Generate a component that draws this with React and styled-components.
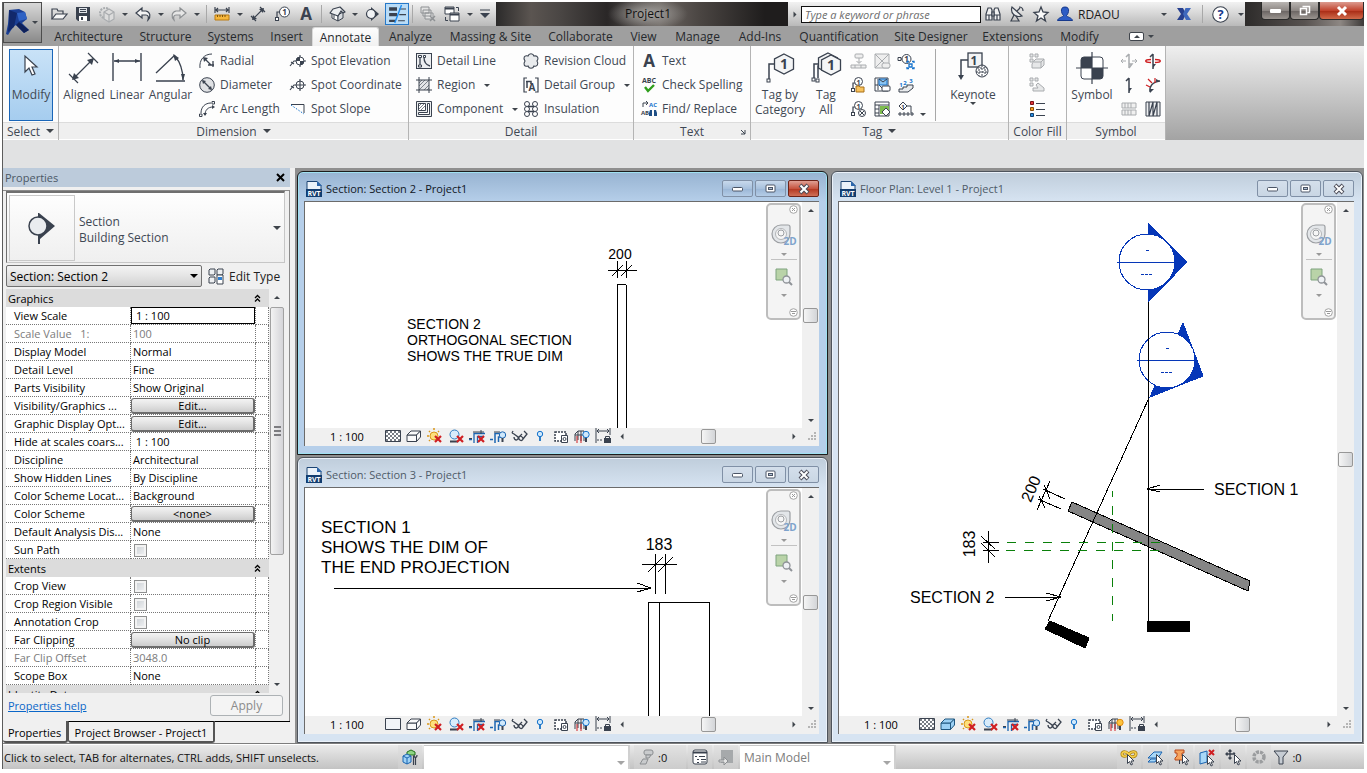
import React from "react";
import styled, { createGlobalStyle, css } from "styled-components";

const Global = createGlobalStyle`
  * { box-sizing: border-box; }
  html, body, #root { height: 100%; }
  body { margin: 0; background: #fff; font-family: "Open Sans", "Noto Sans", sans-serif; font-size: 12px; color: #1b1b1b; overflow: hidden; }
  button, input, select { font: inherit; color: inherit; margin: 0; padding: 0; border: 0; background: none; }
  svg { display: block; flex: none; overflow: visible; }
`;

/* ---------- icon drawings ---------- */
const D = "#3a424f";
const B = "#1673cc";
const G = "#a9acaf";
const R = "#cf1f22";

const L = ({ d, c = D, w = 1, f = "none", ...rest }) => (
  <path d={d} stroke={c} strokeWidth={w} fill={f} {...rest} />
);
const T = ({ x, y, s = 8, c = D, children, b = 700 }) => (
  <text x={x} y={y} fontSize={s} fill={c} fontWeight={b} textAnchor="middle">{children}</text>
);
const RedX = ({ x = 7, y = 7 }) => <L d={`M${x} ${y}l6 6m0-6l-6 6`} c={R} w={2.2} />;
const Pointer = ({ x = 8, y = 5 }) => (
  <path transform={`translate(${x} ${y})`} d="M.5.5v9l2-2 1.5 3.500 1.500-.7L4 7h3z" fill="#fff" stroke={D} />
);
const Hex = ({ x, y, r = 10 }) => (
  <path
    d={`M${x} ${y - r}l${r * 0.95} ${r / 2}v${r}l${-r * 0.95} ${r / 2}l${-r * 0.95} ${-r / 2}v${-r}z`}
    fill="#f4f5f6" stroke={D} strokeWidth="1.3"
  />
);
const box3d = (fill, c = D) => (
  <g fill={fill} stroke={c} strokeLinejoin="round">
    <path d="M1 7h9.500v6.500H1z" /><path d="M1 7l4-4h9.500l-4 4z" /><path d="M10.500 7l4-4v6l-4 4.500z" />
  </g>
);
const leader = (c = D) => (
  <g><L d="M3 12V6h4" c={c} w={1.2} /><rect x="1.500" y="11.500" width="3" height="3" fill="#fff" stroke={c} /></g>
);

const icons = {
  open: <g><L d="M1 13V3h5l1 2h5v3" w={1.2} /><L d="M1 13l4-5h11l-4 5z" w={1.2} f="#f6f6f6" /></g>,
  save: <g><path d="M1 1h14v14H3l-2-2z" fill={D} /><path d="M4 2h8v5H4z" fill="#dfe3e8" /><path d="M5 3.500h6M5 5.500h6" stroke={D} /><path d="M4 10h8v5H4z" fill="#fff" /><path d="M6 11h2v3H6z" fill={D} /></g>,
  sync: <g stroke={G} fill="#dcdcdc" strokeWidth="1.2"><circle cx="6" cy="7" r="5" fill="none" strokeWidth="2" strokeDasharray="2 1" /><path d="M5 6l5-3 5 3v7l-5 3-5-3z" /><path d="M5 6l5 3 5-3M10 9v7" fill="none" /></g>,
  undo: <L d="M7 2L1 7l6 5V9h4c2 0 3 1.500 2 5 3-3 2.500-8-2-9H7z" w={1.2} f="#f3f3f3" />,
  redo: <L d="M9 2l6 5-6 5V9H5c-2 0-3 1.500-2 5C0 11 .5 6 5 5h4z" w={1.2} f="#e6e6e6" c="#8d9093" />,
  measure: <g><L d="M1 1v6M15 1v6M2 4h12M4 2L2 4l2 2M12 2l2 2-2 2" w={1.2} /><path d="M1 9h14v5H1z" fill="#f6b73c" stroke="#b97a12" /><path d="M3.500 9v2M6 9v2M8.500 9v2M11 9v2" stroke="#7c520b" /></g>,
  dim: <g><L d="M3 13L13 3M1 10l5 5M10 1l5 5" w={1.2} /><path d="M2 14l1-5 4 4zM14 2l-5 1 4 4z" fill={D} /></g>,
  tag: <g>{leader()}<circle cx="10.500" cy="6" r="5" fill="#fff" stroke={D} /><T x="10.500" y="9" s={8}>1</T></g>,
  textA: <T x="8" y="14" s={17}>A</T>,
  house: <g stroke={D} strokeLinejoin="round"><path d="M3 7l6 2v6l-6-3z" fill="#fff" /><path d="M9 9l5-3v6l-5 3z" fill="#d5d9de" /><path d="M1 7l3-4 7-2 5 5-2 1-2-2-3 5z" fill="#eceef0" strokeWidth="1.200" /><path d="M5 9v3.500" /></g>,
  section: <g><path d="M6 1l8 7-8 7z" fill={D} /><circle cx="6" cy="8" r="4.500" fill="#f1f3f5" stroke={D} strokeWidth="1.200" /></g>,
  thin: <g><path d="M1 2h7v3H1zM1 7h7v3H1zM1 13h6v2H1z" fill={D} /><path d="M10 3.500h6M10 8.500h6M9 14h6" stroke={D} /><path d="M12 0L6 16" stroke="#1e8cf0" strokeWidth="1.200" /></g>,
  closeHidden: <g fill="#e3e3e3" stroke="#8e9194"><path d="M1 1h8v6H1zM3 4h8v6H3zM5 7h8v6H5z" /><path d="M10 10l5 5m0-5l-5 5" strokeWidth="1.500" /></g>,
  switchWin: <g stroke={D} fill="#fff"><path d="M1 1h9v7H1z" /><path d="M6 7h9v8H6z" /><path d="M6 8.500h9M1 2.500h9" strokeWidth="2" /><path d="M12 1.500h2.500V5M4 14.500H1.500V11" fill="none" /></g>,
  custom: <g><path d="M3 4h10" stroke={D} /><path d="M3 7h10l-5 5z" fill={D} /></g>,
  binoc: <g stroke={D} fill="#f1f1f1" strokeWidth="1.200"><path d="M1 14V8l2-6h3l1 2v10zM15 14V8l-2-6h-3L9 4v10z" /><path d="M7 6h2v4H7zM1 9h6M9 9h6M4 9v5M12 9v5" /></g>,
  dish: <g stroke={D} fill="#e8eaec" strokeWidth="1.200"><path d="M3 1c-2 6 3 11 10 9z" /><path d="M8 5l3-3M10 1c3 0 4 1 4 4M5 9l-3 6h8l-3-5" fill="none" /></g>,
  star: <L d="M8 1l2 5 5 .5-4 3.500 1.500 5L8 12l-4.500 3L5 10 1 6.500 6 6z" w={1.300} f="#fafafa" />,
  user: <g fill="#2c5cc5" stroke="#16398c"><path d="M8 1c3 0 4 2 3.500 4.500C11 8 10 9 9.500 9.500c0 1.500 5.500 2 6 5H.5c.5-3 6-3.500 6-5C6 9 5 8 4.500 5.500 4 3 5 1 8 1z" /></g>,
  exchange: <g><path d="M1 2h6l2 4 1 2-3 6H1l4-6z" fill="#27408f" /><path d="M15 2H9.500L7 8l3 6h5l-4-6z" fill="#3f68bd" /></g>,
  help: <g><circle cx="8" cy="8" r="7.300" fill="#fff" stroke={D} /><T x="8" y="12.500" s={12} c="#16398c">?</T></g>,

  radial: <g><L d="M1 15C0 7 5 1 13 1" /><L d="M6 6l6 6M14 8v6M9 12h6" w={1.300} /><path d="M4 4l5 1-4 4z" fill={D} /></g>,
  diameter: <g><circle cx="8" cy="8" r="7.300" fill="#dfe1e4" stroke={D} /><L d="M4 4l8 8" w={1.300} /><path d="M3 3l4 1-3 3zM13 13l-4-1 3-3z" fill={D} /></g>,
  arc: <g><L d="M2 12C2 6 6 2 12 2M6 14c0-5 3-8 8-8" /><path d="M13 .5h2.500V3H13zM.5 13H3v2.500H.5z" fill="#fff" stroke={D} /><path d="M4 12l2 3 2-3zM13 4v4l3-2z" fill={D} /></g>,
  spotElev: <g><L d="M0 13l4-5h12M10 2v12M1 9l3 2" w={1.100} /><circle cx="10" cy="8" r="4" fill="#fff" stroke={D} /><path d="M10 4v4H6a4 4 0 0 1 4-4zM10 12V8h4a4 4 0 0 1-4 4z" fill={D} /></g>,
  spotCoord: <g><L d="M0 13l4-5h12M10 2v12M1 9l3 2" w={1.100} /><circle cx="10" cy="8" r="4" fill="none" stroke={D} /></g>,
  spotSlope: <g><L d="M1 3.500h13V12" /><path d="M1 4l13 9" stroke={B} strokeDasharray="1.500 1.500" /></g>,
  detailLine: <g><rect x=".5" y=".5" width="15" height="15" fill="#eceef0" stroke={D} /><L d="M4 13V4M8 4c0 5 2 8 6 9" w={1.300} /><path d="M2.500 2.500h3v2h-3zM7.500 2.500h2v2h-2zM2.500 12h3v2h-3z" fill="#fff" stroke={D} /></g>,
  region: <g><path d="M3 3h10v10H3z" fill="#e2e4e7" /><path d="M3 13L13 3M3 9l6-6M8 13l5-5M3 6l3-3M11 13l2-2" stroke="#7d838c" /><L d="M0 3h16M3 0v16M13 0v16M0 13h16" /></g>,
  component: <g><path d="M.5.5h15v15H.5z" fill="#eceef0" stroke={D} /><path d="M2.500 2.500h7v7h-7zM11.500 2.500h2v11h-11v-2h9z" fill="#fff" stroke={D} /><path d="M3 5l2-2M3 8l5-5M5 9l4-4" stroke="#7d838c" /></g>,
  cloud: <L d="M5 3c1-3 5-3 6 0 4-1 5 3 3 5 2 3 0 6-3 5-1 3-5 3-6 0-4 1-5-2-3-5-2-3-1-6 3-5z" f="#e9ebed" w={1.100} />,
  group: <g><L d="M4 1H1v14h3M12 1h3v14h-3" w={1.200} /><L d="M4 4v7M3 4.500h5V7" w={1.500} /><T x="9" y="14" s={10}>A</T></g>,
  insulation: <g stroke={D} fill="#fff"><circle cx="4" cy="3" r="2.500" /><circle cx="12" cy="3" r="2.500" /><circle cx="4" cy="8" r="2.500" /><circle cx="12" cy="8" r="2.500" /><circle cx="4" cy="13" r="2.500" /><circle cx="12" cy="13" r="2.500" /><path d="M5 5.500h6M5 10.500h6" strokeWidth="1.500" /></g>,
  abc: <g><T x="8" y="6" s={7}>ABC</T><L d="M4 10l3 4 6-6" c="#2f9e1c" w={2.400} /></g>,
  find: <g><L d="M2 6V2h5M5 0l2 2-2 2" /><T x="12" y="6" s={6} c={B}>AC</T><T x="4" y="14" s={6}>AB</T><path d="M8 15v-3l1-3h2v6zM16 15v-3l-1-3h-2v6z" fill="#1f4f86" /></g>,
  tagG1: <g stroke={G} fill="#eee"><rect x="5" y="1" width="8" height="4" rx="1" /><path d="M9 5v5M6.500 8L9 10.500 11.500 8M1 12h15v3H1zM5 12v3M11 12v3" /></g>,
  tagG2: <g stroke={G} fill="#eee"><path d="M1 1h14v14H1zM1 1l14 14M15 1L1 15" /><rect x="8" y="10" width="8" height="5" rx="2" /></g>,
  tagRoom: <g><L d="M0 6h4" /><circle cx="8.500" cy="6" r="4.500" fill="#fff" stroke={D} /><T x="8.500" y="9">1</T><path d="M0 4.500h3v3H0z" fill="#fff" stroke={D} /><path d="M9 10V8.500h2M14 8.500h2V10M16 14v1.500h-2M11 15.500H9V14M11 11h3v3h-3z" stroke={B} fill="none" strokeWidth="1.300" /></g>,
  tagFolder: <g>{leader()}<circle cx="8.500" cy="4.500" r="4" fill="#fff" stroke={D} /><T x="8.500" y="7.500" s={7}>1</T><path d="M6 9h3l1 1h4v5H6z" fill="#f7c25c" stroke="#a8701a" /></g>,
  tagBlue: <g><path d="M1 1h13v13H1z" fill="#fff" stroke={D} /><path d="M4 2v11M1 8h3M5 8l3 3" stroke={D} /><path d="M5 2h8v6H5z" fill="#8cc5f2" stroke={B} /><path d="M5 2l4 3 4-3" stroke={D} fill="none" /><rect x="8" y="9" width="8" height="5" rx="1" fill="#fff" stroke={D} /></g>,
  stairs: <g><path d="M1 15v-3h4v-2h4V8h6v3l-5 4H1z" fill="#e9ebed" stroke={D} /><T x="3" y="10" s={6} c={B}>1</T><T x="7" y="8" s={6} c={B}>2</T><T x="13" y="6" s={6} c={B}>3</T></g>,
  tagNo: <g>{leader()}<circle cx="8.500" cy="4.500" r="4" fill="#fff" stroke={D} /><T x="8.500" y="7.500" s={7}>1</T><circle cx="12" cy="12" r="3.500" fill="#fff" stroke={D} /><L d="M10 10l4 4M14 10l-4 4" /></g>,
  tagGreen: <g><path d="M1 1h14v14H1z" fill="#fff" stroke={D} /><path d="M6 5h9v8H6z" fill="#7dbb4e" /><path d="M1 4h14M5 4v11M1 8h4M1 12h4" stroke={D} /><path d="M12 7l4 4-4 4-4-4z" fill="#fff" stroke={D} /></g>,
  tagSpan: <g><path d="M5 1l4 4-4 4-4-4z" fill="#fff" stroke={D} /><T x="5" y="7.500" s={6}>1</T><L d="M9 5h4v7M0 13h16M2 11v4M6 11v4M10 11v4M14 11v4" /></g>,
  fillG1: <g stroke={G} fill="#e6e7e8"><path d="M1 1h3v3H1zM6 1h3v3H6zM1 6h3v3H1z" /><path d="M5 8l2-2h8v6l-3 3H3v-4z" /><path d="M12 9v6M5 9h7l3-3" fill="none" /></g>,
  fillG2: <g stroke={G} fill="#e6e7e8"><path d="M1 1h3v3H1zM6 1h3v3H6zM1 6h3v3H1z" /><path d="M7 8l2-2 6 5v3H4v-3h5z" /></g>,
  legend: <g><path d="M1.500.5h3v3h-3z" fill="#e0343a" stroke="#7a1114" /><path d="M1.500 6.500h3v3h-3z" fill="#f59a22" stroke="#8a4d05" /><path d="M1.500 12.500h3v3h-3z" fill="#2b8de0" stroke="#0f3f6e" /><path d="M7 2.500h9M7 8.500h9M7 14.500h9" stroke={D} /></g>,
  symG1: <g stroke={G} fill="none"><path d="M8 1v14M5 4l3-3M8 15l3-4H8" strokeWidth="1.500" /><path d="M0 8h5M11 8h5M2 6L0 8l2 2M14 6l2 2-2 2" /></g>,
  symRot: <g fill="none"><path d="M8 1v15M5 4l3-3" stroke={D} strokeWidth="1.500" /><path d="M8 11h3l-3 4z" fill={D} /><path d="M6 9.500c-7 0-7-3 0-3M10 6.500c7 0 7 3 0 3" stroke={R} strokeWidth="1.500" /></g>,
  symUp: <g><L d="M8 1v15M5 4l3-3" w={1.500} /><path d="M8 11h3l-3 4z" fill={D} /></g>,
  symArc: <g><L d="M5 15c-1-5 2-10 10-11" w={1.300} /><path d="M11 2l4 2h-4zM5 12h4l-4 4z" fill={D} /><path d="M1 8l4 2M3 2l4 4M10 1v5" stroke={R} strokeWidth="1.200" /></g>,
  symG2: <g stroke={G} fill="#f0f0f0"><path d="M1 2h14v5H1zM1 9h14v5H1z" /><path d="M4 2v5M7 2v5M10 2v5M4 9v5M7 9v5M10 9v5" /></g>,
  symSpan: <g><path d="M1 1h14v14H1z" fill="#eceef0" stroke={D} /><L d="M4 1v14M12 1v14M4 15L8 1M8 15l4-14M8 1v14" w={1.200} /></g>,

  hatch: <g><path d="M.5 2.500h15v11H.5z" fill="#fff" /><path d="M1 4h14M1 8h14M1 12h14" stroke="#777c84" strokeWidth="2" strokeDasharray="2 2" /><path d="M3 6h12M3 10h12" stroke="#777c84" strokeWidth="2" strokeDasharray="2 2" /><path d="M.5 2.500h15v11H.5z" fill="none" stroke={D} /></g>,
  blank: <path d="M.5 2.500h15v11H.5z" fill="#f1f4f8" stroke={D} />,
  cube: box3d("#fafafa"),
  cubeBlue: box3d("#9bd0f4", "#1f567f"),
  sunX: <g><path d="M7 0v2M0 8h2M2 3l1 1M12 3l-1 1M2 13l1-1" stroke="#d9971a" strokeWidth="1.500" /><circle cx="7" cy="8" r="4" fill="#fde07c" stroke="#d9971a" /><RedX x={8} y={8} /></g>,
  shadowX: <g><circle cx="6.500" cy="6.500" r="4.500" fill="#d8ecfb" stroke="#2e7cc2" /><path d="M2 13.500h8" stroke={D} strokeWidth="2" /><RedX x={9} y={8} /></g>,
  cropX: <g><L d="M0 11.500h3M5 15V5.500h11M8.500 15V8.500H15" c="#1b65b1" w={1.300} /><path d="M0 10.500h3M4 4h11M12 2v4" stroke={D} /><RedX x={9} y={8} /></g>,
  cropBulb: <g><L d="M0 11.500h3M5 15V5.500h6M8.500 14V9H11" c="#1b65b1" w={1.500} /><path d="M4 4h6" stroke={D} /><circle cx="12.500" cy="7" r="3.200" fill="#cfe8fb" stroke="#1b65b1" /><path d="M11.500 10h2v4h-2z" fill={D} /></g>,
  glasses: <g><L d="M1 5l2 1 4 3c1 4-4 4-4 0M8 9c1-2 4 0 4 2-1 3-5 1-4-2l3-3M1 5l1-2M12 11l4-5-3-3" w={1.300} /></g>,
  bulb: <g><circle cx="8" cy="6" r="2.700" fill="#cfe8fb" stroke={B} /><path d="M7 9h2v4H7z" fill="#2f7fc6" /></g>,
  bulbBox: <g><path d="M2 4h11v9H2z" fill="#fff" stroke={D} strokeWidth="1.500" strokeDasharray="2 1" /><path d="M8.500 7.500h6v7h-6z" fill="#fff" stroke={D} /><circle cx="11.500" cy="11" r="1.500" fill="#fff" stroke={D} /></g>,
  analytic: <g><path d="M1 13V6l3-3h6v10M1 7h9M4 3v9M7 3v10" stroke={D} fill="none" /><path d="M3 8v7M7 8v7" stroke={R} /><circle cx="12" cy="6.500" r="3.200" fill="#cfe8fb" stroke={B} /><path d="M11 10h2v4h-2z" fill={D} /></g>,
  analyticOn: <g><path d="M1 13V6l3-3h6v10M1 7h9M4 3v9M7 3v10" stroke={D} fill="none" /><path d="M3 8v7M7 8v7" stroke={R} /><circle cx="12" cy="6.500" r="3.200" fill="#fdc33d" stroke="#e08a10" /><path d="M11 10h2v4h-2z" fill={D} /></g>,
  lockDim: <g><L d="M1 0v15M15 0v7M2 3h12M4 1L2 3l2 2M12 1l2 2-2 2" /><path d="M2 12h6" stroke={D} strokeDasharray="2 1" /><path d="M9 10h7v5H9z" fill={D} /><path d="M10.500 10V8.500h4V10" stroke={D} fill="none" /></g>,

  editType: <g stroke={D} fill="#eef0f2"><path d="M1 2l1-1h5v5L6 7H1zM9 2l1-1h5v5l-1 1H9zM1 10l1-1h5v5l-1 1H1z" /><path d="M9 7h6v9H9z" fill="#fff" /><path d="M10 9h4v3h-4z" fill="#2f7fd0" stroke="none" /></g>,
  worksets: <g strokeLinejoin="round"><path d="M5 3l4-2 4 2v3H5z" fill="#8fd584" stroke="#22701a" /><path d="M1 7l4-2 4 2v6l-4 2-4-2z" fill="#9fd2f5" stroke="#1b65b1" /><path d="M1 7l4 2 4-2M5 9v6" stroke="#1b65b1" fill="none" /><path d="M11.500 7v9M15 6c0 3-3 3-3 0M13.500 8v8" stroke={D} fill="none" strokeWidth="1.200" /></g>,
  editReq: <g fill="#c9cbcd" stroke="#8b8e91"><rect x="5" y="1" width="9" height="5" rx="2" /><path d="M7 6h5l-2 3H7zM1 15l3-5h5l-2 5z" /></g>,
  options: <g><rect x="1" y="1" width="14" height="14" rx="2" fill="#fff" stroke={D} /><path d="M1 3.500h14" stroke={D} strokeWidth="2" /><path d="M3 7h2v1H3zM5 10h2v1H5zM5 13h2v1H5z" fill={D} /><path d="M7 7.500h6M9 10.500h5M9 13h5" stroke={D} /></g>,
  optAdd: <g><path d="M3 1h12v13H3z" fill="#a6a9ab" /><path d="M1 11h5V8l4 4-4 4v-3H1z" fill="#e3e3e3" stroke="#8b8e91" /></g>,
  selLink: <g fill="none"><path d="M8 6C6 2 1 2 1 5s5 3 7 0 7-3 7 0-5 4-7 1" stroke="#a97d0a" strokeWidth="3" /><path d="M8 6C6 2 1 2 1 5s5 3 7 0 7-3 7 0-5 4-7 1" stroke="#f6cf4c" strokeWidth="1.600" /><Pointer x={6} y={5} /></g>,
  selUnder: <g><path d="M1 9l6-6h8l-4 6zM1 13l3-3h6l-2 3z" fill="#a9d8f8" stroke="#1b65b1" /><Pointer x={9} y={5} /></g>,
  selPin: <g><path d="M2 1h9v3H9v3l2 2v2H2V9l2-2V4H2z" fill="#f6a25c" stroke="#b8481a" /><path d="M6.500 11v4" stroke={D} /><Pointer x={9} y={5} /></g>,
  selFace: <g><path d="M1 4l7-2v11l-7 2z" fill="#a9d8f8" stroke="#1b65b1" /><path d="M10 1l5 5m0-5l-5 5" stroke={R} strokeWidth="2" /><Pointer x={8} y={6} /></g>,
  selDrag: <g><L d="M5 1v9M1 5h9M3.500 2.500L5 1l1.500 1.500M3.500 8.500L5 10l1.500-1.500M2.500 3.500L1 5l1.500 1.500M8.500 3.500L10 5" w={1.300} /><Pointer x={9} y={5} /></g>,
  wheel: <circle cx="8" cy="8" r="5" fill="none" stroke="#9b9d9f" strokeWidth="3.500" strokeDasharray="3 1" />,
  filter: <path d="M1 2h14L10 8v7H6V8z" fill="#c6ccd3" stroke={D} />,
};

const big = {
  cursor: <path d="M10 4v16l4-4 3 7 3-1-3-7h5z" fill="#fff" stroke={D} strokeWidth="1.200" />,
  aligned: <g><L d="M5 27L25 7M1 22l9 9M20 1l10 10" w={1.200} /><path d="M4 28l2-7 5 5zM26 6l-7 2 5 5z" fill={D} /></g>,
  linear: <g><L d="M2 1v28M30 1v28M3 9h26" w={1.400} /><path d="M3 9l5-2v4zM29 9l-5-2v4z" fill={D} /></g>,
  angular: <g><L d="M1 21L20 3M1 29h29" w={1.300} /><L d="M20 4c5 6 8 14 8 24" w={1.300} /><path d="M18 2l6 4-4 3zM28 29l-2-7h4z" fill={D} /></g>,
  tag: <g><L d="M5 27V12h7" w={1.500} /><rect x="3" y="27" width="3" height="3" fill="#fff" stroke={D} /><Hex x={20} y={12} /><T x="20" y="17" s={14}>1</T></g>,
  tagAll: <g><L d="M4 26V12h6M8 26V14h4" w={1.500} /><rect x="2" y="26" width="3" height="3" fill="#fff" stroke={D} /><rect x="6" y="27" width="3" height="3" fill="#fff" stroke={D} /><Hex x={18} y={11} /><Hex x={21} y={13} /><T x="21" y="18" s={14}>1</T></g>,
  keynote: <g><L d="M4 24V8h8" w={1.500} /><path d="M1 23h6l-3 5z" fill={D} /><rect x="11" y="1" width="14" height="14" fill="#f3f4f5" stroke={D} strokeWidth="1.300" /><T x="17" y="13" s={12}>1</T><circle cx="25" cy="19" r="6" fill="#fff" stroke={D} /><path d="M20 16h10M19 20h12M22 14v10M25 13v12M28 14v10" stroke={D} strokeDasharray="2 1" /></g>,
  symbol: <g><rect x="5" y="5" width="22" height="22" rx="3" fill="#fff" stroke={D} /><path d="M16 5h8a3 3 0 0 1 3 3v8H16zM16 27H8a3 3 0 0 1-3-3v-8h11z" fill={D} transform="matrix(-1 0 0 1 32 0)" /><L d="M16 0v32M0 16h32" w={1.200} /></g>,
};

const Icon = ({ name, size = 16 }) => (
  <svg width={size} height={size} viewBox="0 0 16 16" aria-hidden="true">{icons[name]}</svg>
);
const BigIcon = ({ name }) => (
  <svg width="32" height="32" viewBox="0 0 32 32" aria-hidden="true">{big[name]}</svg>
);

const Caret = styled.i`
  display: inline-block;
  flex: none;
  border: ${(p) => p.$s || 3}px solid transparent;
  border-bottom: 0;
  border-top: ${(p) => p.$s || 3}px solid ${(p) => p.$c || "#3f444b"};
  ${(p) => p.$dir === "up" && css`transform: rotate(180deg);`}
  ${(p) => p.$dir === "left" && css`transform: rotate(90deg);`}
  ${(p) => p.$dir === "right" && css`transform: rotate(-90deg);`}
`;

/* ---------- frame ---------- */
const Shell = styled.div`
  display: flex;
  flex-direction: column;
  height: 100vh;
  padding: 2px 3px 4px 2px;
`;
const Frame = styled.div`
  display: flex;
  flex-direction: column;
  flex: 1;
  min-height: 0;
  border-left: 1px solid #5c5c5c;
  background: #f0f0f0;
`;
const Header = styled.header`
  display: grid;
  grid-template-columns: 39px 1fr;
  grid-template-rows: 24px 20px;
  background: #9f9f9f;
`;
const AppButton = styled.button`
  grid-row: 1 / 3;
  height: 41px;
  display: flex;
  align-items: center;
  justify-content: space-between;
  padding: 0 3px 0 2px;
  border: 1px solid #4d4d4d;
  background: linear-gradient(#d8d8d8, #8a8a8a);
`;
const TitleRow = styled.div`
  display: flex;
  align-items: stretch;
  background: linear-gradient(#f2f2f2, #b9b9b9);
`;
const QuickBar = styled.div`
  display: flex;
  align-items: center;
  padding: 0 2px 0 5px;
`;
const Tool = styled.button`
  display: flex;
  align-items: center;
  justify-content: center;
  width: ${(p) => p.$w || 24}px;
  height: ${(p) => p.$h || 24}px;
  ${(p) => p.$on && css`border: 1px solid #2678c8; background: #b9dcf7; height: 22px;`}
`;
const Divider = styled.span`
  width: 1px;
  height: ${(p) => p.$h || 18}px;
  margin: 0 ${(p) => p.$m || 3}px;
  background: #a8a8a8;
`;
const DocTitle = styled.div`
  flex: 1;
  padding-left: 12px;
  line-height: 23px;
  text-align: center;
  color: #111;
  background:
    radial-gradient(40px 16px at 52% 50%, #a7a5a2, transparent),
    linear-gradient(90deg, #2b2a2a, #5b5551 12%, #4a4644 22%, #2a2727 38%, #6b6561 56%, #4a4542 70%, #1f1d1d 92%);
`;
const Search = styled.input`
  width: 180px;
  margin: 1px 0;
  padding: 0 3px;
  border: 1px solid #111;
  background: #fff;
  font-size: 11px;
  font-style: italic;
  &::placeholder { color: #6d6d6d; opacity: 1; }
`;
const InfoBar = styled.div`
  display: flex;
  align-items: center;
`;
const UserName = styled.button`
  display: flex;
  align-items: center;
  justify-content: space-between;
  width: 90px;
  padding-left: 1px;
`;
const WinControls = styled.div`
  display: flex;
  align-items: flex-start;
  width: 119px;
  padding-left: 16px;
  background: linear-gradient(90deg, #2d2b2a, #575250 50%, #8d8783 80%, #3c3938);
`;
const WinButton = styled.button`
  display: flex;
  align-items: center;
  justify-content: center;
  width: ${(p) => (p.$close ? 45 : 29)}px;
  height: 18px;
  border: 1px solid #2b2b2b;
  border-top: 0;
  border-radius: 0 0 4px 4px;
  background: ${(p) => (p.$close ? "linear-gradient(#dc9b8f, #c1432d 50%, #a92b15 52%, #d06a4a)" : "linear-gradient(#b9b5b2, #8d8784 50%, #6a6462 52%, #9a948f)")};
`;

const TabRow = styled.nav`
  display: flex;
  align-items: stretch;
  padding-left: 4px;
`;
const Tab = styled.button`
  width: ${(p) => p.$w}px;
  margin: ${(p) => (p.$on ? "1px 0 0" : 0)};
  border-radius: 3px 3px 0 0;
  color: #26292d;
  white-space: nowrap;
  ${(p) => p.$on && css`background: linear-gradient(#fdfdfd, #f1f1f1); border: 1px solid #d9d9d9; border-bottom: 0;`}
`;
const Minimize = styled.button`
  display: flex;
  align-items: center;
  gap: 4px;
  margin-left: 21px;
`;
const MiniBox = styled.span`
  display: flex;
  align-items: center;
  justify-content: center;
  width: 15px;
  height: 9px;
  border: 1px solid #3f444b;
  border-radius: 2px;
  background: #fff;
`;

/* ---------- ribbon ---------- */
const Ribbon = styled.section`
  display: flex;
  height: 94px;
  background: linear-gradient(#efefef, #a3a3a3);
`;
const PanelBox = styled.section`
  display: flex;
  flex-direction: column;
  flex: none;
  width: ${(p) => p.$w}px;
  border-right: 1px solid #b4b4b4;
  background: #fdfdfd;
  color: #3f4854;
`;
const PanelBody = styled.div`
  display: flex;
  flex: 1;
  padding: 3px 0 0 ${(p) => p.$pad}px;
`;
const PanelFoot = styled.footer`
  display: flex;
  align-items: center;
  justify-content: center;
  gap: 6px;
  height: 18px;
  position: relative;
  border-top: 1px solid #dcdcdc;
  border-bottom: 1px solid #fff;
  background: #efefef;
  white-space: nowrap;
`;
const Launcher = styled.button`
  position: absolute;
  right: 4px;
  bottom: 4px;
`;
const Col = styled.div`
  display: flex;
  flex-direction: column;
  margin-left: ${(p) => p.$ml || 0}px;
  width: ${(p) => (p.$w ? p.$w + "px" : "auto")};
`;
const BigBtn = styled.button`
  display: flex;
  flex-direction: column;
  align-items: center;
  width: ${(p) => p.$w}px;
  height: 72px;
  padding-top: ${(p) => (p.$on ? 2 : 3)}px;
  line-height: 15px;
  white-space: nowrap;
  ${(p) => p.$on && css`border: 1px solid #1a66b8; background: linear-gradient(#c9e2f7, #a6cdef);`}
`;
const BigText = styled.span`
  margin-top: 3px;
`;
const SmallBtn = styled.button`
  display: flex;
  align-items: center;
  gap: 5px;
  height: 24px;
  white-space: nowrap;
`;
const SmallText = styled.span`
  margin-right: 4px;
  padding-bottom: 1px;
`;
const IconGrid = styled.div`
  display: grid;
  grid-template-columns: repeat(${(p) => p.$n}, 24px);
  grid-auto-rows: 24px;
`;
const GridCaret = styled.span`
  align-self: flex-start;
  width: 14px;
  padding: 54px 0 0 2px;
`;
const OptionsBar = styled.div`
  height: 28px;
  background: #e1e2e3;
`;

const Panel = ({ title, w, pad = 0, arrow, launcher, children }) => (
  <PanelBox $w={w}>
    <PanelBody $pad={pad}>{children}</PanelBody>
    <PanelFoot>
      {title}{arrow && <Caret $s={4} />}
      {launcher && (
        <Launcher aria-label="Text settings">
          <svg width="6" height="6"><path d="M1 1l4 4M5 1v4H1" stroke={D} fill="none" /></svg>
        </Launcher>
      )}
    </PanelFoot>
  </PanelBox>
);
const Big = ({ icon, w, on, lines, caret }) => (
  <BigBtn $w={w} $on={on}>
    <BigIcon name={icon} />
    <BigText>{lines.map((t, i) => <React.Fragment key={t}>{i > 0 && <br />}{t}</React.Fragment>)}</BigText>
    {caret && <Caret />}
  </BigBtn>
);
const Small = ({ icon, children, caret }) => (
  <SmallBtn><Icon name={icon} /><SmallText>{children}</SmallText>{caret && <Caret />}</SmallBtn>
);

const tabs = [
  ["Architecture", 85], ["Structure", 69], ["Systems", 61], ["Insert", 51], ["Annotate", 67], ["Analyze", 63],
  ["Massing & Site", 97], ["Collaborate", 83], ["View", 43], ["Manage", 65], ["Add-Ins", 60],
  ["Quantification", 98], ["Site Designer", 86], ["Extensions", 77], ["Modify", 57],
];

const Top = () => (
  <Header>
    <AppButton aria-label="Application menu">
      <svg width="26" height="32" viewBox="0 0 26 32">
        <path d="M3 3l10-1 6 3 2 7-5 4 7 7-5 3-8-8-3 2-5 8-2-1 2-10z" fill="#1b3f94" />
        <path d="M3 3l8 3-3 14-6 5 1-10z" fill="#12296b" />
        <path d="M11 6l8-1 2 7-8 2z" fill="#2f62c4" />
        <path d="M13 15l10 8-5 3-8-8z" fill="#0f215a" />
      </svg>
      <Caret />
    </AppButton>
    <TitleRow>
      <QuickBar>
        <Tool aria-label="Open"><Icon name="open" /></Tool>
        <Tool aria-label="Save"><Icon name="save" /></Tool>
        <Tool aria-label="Synchronize"><Icon name="sync" /></Tool>
        <Tool $w={12} aria-label="Synchronize options"><Caret /></Tool>
        <Tool aria-label="Undo"><Icon name="undo" /></Tool>
        <Tool $w={12} aria-label="Undo list"><Caret /></Tool>
        <Tool aria-label="Redo"><Icon name="redo" /></Tool>
        <Tool $w={12} aria-label="Redo list"><Caret /></Tool>
        <Divider $m={3} />
        <Tool aria-label="Measure"><Icon name="measure" /></Tool>
        <Tool $w={12} aria-label="Measure options"><Caret /></Tool>
        <Tool aria-label="Aligned dimension"><Icon name="dim" /></Tool>
        <Tool aria-label="Tag by category"><Icon name="tag" /></Tool>
        <Tool aria-label="Text"><Icon name="textA" /></Tool>
        <Divider $m={3} />
        <Tool aria-label="Default 3D view"><Icon name="house" /></Tool>
        <Tool $w={12} aria-label="3D view options"><Caret /></Tool>
        <Tool aria-label="Section"><Icon name="section" /></Tool>
        <Tool $on aria-label="Thin lines"><Icon name="thin" size={18} /></Tool>
        <Divider />
        <Tool aria-label="Close hidden windows"><Icon name="closeHidden" /></Tool>
        <Tool aria-label="Switch windows"><Icon name="switchWin" /></Tool>
        <Tool $w={12} aria-label="Window list"><Caret /></Tool>
        <Tool $w={18} aria-label="Customize"><Icon name="custom" /></Tool>
      </QuickBar>
      <DocTitle>Project1</DocTitle>
      <InfoBar>
        <Tool $w={13} aria-label="Collapse search"><Caret $dir="right" /></Tool>
        <Search aria-label="Search" placeholder="Type a keyword or phrase" />
        <Tool aria-label="Search help"><Icon name="binoc" /></Tool>
        <Tool aria-label="Communication center"><Icon name="dish" /></Tool>
        <Tool aria-label="Favorites"><Icon name="star" /></Tool>
        <Tool aria-label="Account"><Icon name="user" /></Tool>
        <UserName>RDAOU<Caret /></UserName>
        <Tool $w={34} aria-label="Exchange apps"><Icon name="exchange" /></Tool>
        <Divider $m={1} />
        <Tool $w={32} aria-label="Help"><Icon name="help" size={17} /></Tool>
        <Tool $w={9} aria-label="Help menu"><Caret /></Tool>
      </InfoBar>
      <WinControls>
        <WinButton aria-label="Minimize"><svg width="11" height="5"><rect width="11" height="4" y="1" rx="1" fill="#fff" /></svg></WinButton>
        <WinButton aria-label="Restore"><svg width="12" height="11"><path d="M3.500 1.500h7v6h-2M1.500 3.500h6v6h-6z" fill="none" stroke="#fff" strokeWidth="1.500" /></svg></WinButton>
        <WinButton $close aria-label="Close"><svg width="12" height="10"><path d="M2 1l8 8m0-8L2 9" stroke="#fff" strokeWidth="3" /></svg></WinButton>
      </WinControls>
    </TitleRow>
    <TabRow>
      {tabs.map(([t, w]) => <Tab key={t} $w={w} $on={t === "Annotate"}>{t}</Tab>)}
      <Minimize aria-label="Minimize ribbon"><MiniBox><Caret $dir="up" /></MiniBox><Caret /></Minimize>
    </TabRow>
  </Header>
);

const RibbonBar = () => (
  <Ribbon>
    <Panel title="Select" w={56} pad={6} arrow><Big icon="cursor" w={44} on lines={["Modify"]} /></Panel>
    <Panel title="Dimension" w={350} pad={3} arrow>
      <Big icon="aligned" w={44} lines={["Aligned"]} />
      <Big icon="linear" w={42} lines={["Linear"]} />
      <Big icon="angular" w={45} lines={["Angular"]} />
      <Col $w={91} $ml={6}><Small icon="radial">Radial</Small><Small icon="diameter">Diameter</Small><Small icon="arc">Arc Length</Small></Col>
      <Col><Small icon="spotElev">Spot Elevation</Small><Small icon="spotCoord">Spot Coordinate</Small><Small icon="spotSlope">Spot Slope</Small></Col>
    </Panel>
    <Panel title="Detail" w={225} pad={7}>
      <Col $w={107}><Small icon="detailLine">Detail Line</Small><Small icon="region" caret>Region</Small><Small icon="component" caret>Component</Small></Col>
      <Col><Small icon="cloud">Revision Cloud</Small><Small icon="group" caret>Detail Group</Small><Small icon="insulation">Insulation</Small></Col>
    </Panel>
    <Panel title="Text" w={117} pad={7} launcher>
      <Col><Small icon="textA">Text</Small><Small icon="abc">Check Spelling</Small><Small icon="find">Find/ Replace</Small></Col>
    </Panel>
    <Panel title="Tag" w={258} pad={3} arrow>
      <Big icon="tag" w={52} lines={["Tag by", "Category"]} />
      <Big icon="tagAll" w={40} lines={["Tag", "All"]} />
      <IconGrid $n={3}>
        {["tagG1", "tagG2", "tagRoom", "tagFolder", "tagBlue", "stairs", "tagNo", "tagGreen", "tagSpan"].map((n) => (
          <Tool key={n} aria-label={n}><Icon name={n} /></Tool>
        ))}
      </IconGrid>
      <GridCaret><Caret /></GridCaret>
      <Divider $h={72} />
      <Big icon="keynote" w={68} lines={["Keynote"]} caret />
    </Panel>
    <Panel title="Color Fill" w={58} pad={16}>
      <IconGrid $n={1}>
        {["fillG1", "fillG2", "legend"].map((n) => <Tool key={n} aria-label={n}><Icon name={n} /></Tool>)}
      </IconGrid>
    </Panel>
    <Panel title="Symbol" w={99}>
      <Big icon="symbol" w={50} lines={["Symbol"]} />
      <IconGrid $n={2}>
        {["symG1", "symRot", "symUp", "symArc", "symG2", "symSpan"].map((n) => <Tool key={n} aria-label={n}><Icon name={n} /></Tool>)}
      </IconGrid>
    </Panel>
  </Ribbon>
);

/* ---------- properties palette ---------- */
const Work = styled.main`
  display: flex;
  flex: 1;
  min-height: 0;
`;
const Palette = styled.aside`
  display: flex;
  flex-direction: column;
  flex: none;
  width: 287px;
  margin-right: 5px;
`;
const PaletteHead = styled.header`
  display: flex;
  align-items: center;
  justify-content: space-between;
  height: 19px;
  padding: 0 5px 0 2px;
  background: #bccbdb;
  color: #4b5866;
  font-size: 11px;
`;
const PaletteBody = styled.div`
  display: flex;
  flex-direction: column;
  flex: 1;
  min-height: 0;
  margin-top: 3px;
  padding: 0 4px 0 3px;
  border-top: 1px solid #8a8a8a;
  border-right: 1px solid #8a8a8a;
`;
const TypePicker = styled.button`
  display: flex;
  align-items: center;
  gap: 4px;
  height: 72px;
  padding: 3px 3px 2px 2px;
  border: 1px solid #c6c6c6;
  border-top: 2px solid #6f6f6f;
  border-left-color: #6f6f6f;
  background: linear-gradient(#fefefe, #efefef);
  text-align: left;
  line-height: 16px;
  color: #3f4854;
`;
const Preview = styled.span`
  display: flex;
  align-items: center;
  justify-content: center;
  width: 66px;
  height: 66px;
  border: 1px solid #c9c9c9;
`;
const TypeName = styled.span`
  flex: 1;
  padding-top: 4px;
`;
const FilterRow = styled.div`
  display: flex;
  align-items: center;
  gap: 6px;
  height: 26px;
`;
const SelectBox = styled.span`
  display: flex;
  align-items: center;
  justify-content: flex-end;
  position: relative;
  width: 196px;
`;
const Picker = styled.select`
  appearance: none;
  width: 100%;
  height: 22px;
  padding: 0 3px;
  border: 1px solid #707070;
  border-radius: 2px;
  background: linear-gradient(#f3f3f3, #e4e4e4 50%, #d2d2d2);
  color: #000;
`;
const PickerCaret = styled(Caret)`
  position: absolute;
  right: 4px;
  pointer-events: none;
`;
const EditType = styled.button`
  display: flex;
  align-items: center;
  gap: 5px;
  color: #222;
`;
const Sheet = styled.div`
  display: flex;
  flex: 1;
  min-height: 0;
`;
const SheetView = styled.div`
  width: 263px;
  overflow: hidden;
`;
const Grid = styled.table`
  width: 100%;
  table-layout: fixed;
  border-collapse: separate;
  border-spacing: 0;
  background: #fff;
  color: #000;
  font-size: 11px;
`;
const Row = styled.tr`
  height: 18px;
  ${(p) => p.$dim && css`color: #7c7c7c;`}
`;
const Group = styled.th`
  padding: 0 8px 0 2px;
  height: 18px;
  background: #dcdcdc;
  font-weight: 400;
  text-align: left;
  line-height: 17px;
`;
const GroupLine = styled.span`
  display: flex;
  align-items: center;
  justify-content: space-between;
`;
const Key = styled.th`
  height: 18px;
  padding: 0 0 0 8px;
  border-bottom: 1px dotted #777;
  border-right: 1px dotted #777;
  font-weight: 400;
  text-align: left;
  line-height: 17px;
  white-space: pre;
`;
const Val = styled.td`
  height: 18px;
  padding: ${(p) => (p.$flush ? "0" : "0 0 0 2px")};
  border-bottom: 1px dotted #777;
  border-right: 1px dotted #777;
  line-height: 17px;
  white-space: pre;
`;
const ScaleInput = styled.input`
  display: block;
  width: 100%;
  height: 17px;
  padding: 0 4px;
  border: 1px solid #000;
  background: #fff;
`;
const CellButton = styled.button`
  display: block;
  width: 100%;
  height: 16px;
  border: 1px solid #6c6c6c;
  border-right-width: 2px;
  border-bottom-width: 2px;
  border-radius: 3px;
  background: linear-gradient(#f4f4f4, #e2e2e2 50%, #cdcdcd);
  line-height: 13px;
  text-align: center;
`;
const Tick = styled.input`
  appearance: none;
  display: block;
  width: 13px;
  height: 13px;
  margin: 2px 0 0 1px;
  border: 1px solid #8e8f8f;
  background: linear-gradient(135deg, #c9ced3, #f4f5f6);
  box-shadow: inset 0 0 0 2px #f3f3f3;
`;
const VScroll = styled.div`
  display: flex;
  flex-direction: column;
  align-items: center;
  width: 16px;
  padding: 7px 0;
  background: #f0f0f0;
`;
const PaletteThumb = styled.div`
  display: flex;
  flex-direction: column;
  justify-content: center;
  align-items: center;
  gap: 2px;
  width: 14px;
  height: 248px;
  margin-top: 8px;
  border: 1px solid #a1a1a1;
  border-radius: 2px;
  background: linear-gradient(90deg, #f3f3f3, #d4d4d8);
`;
const Grip = styled.span`
  width: 7px;
  height: 2px;
  background: #7c7c80;
`;
const Spring = styled.span`
  flex: 1;
`;
const HelpRow = styled.div`
  display: flex;
  align-items: center;
  justify-content: space-between;
  height: 28px;
  padding: 0 2px 3px;
`;
const HelpLink = styled.a`
  color: #0a66c8;
  font-size: 11px;
`;
const Apply = styled.button`
  width: 73px;
  height: 21px;
  border: 1px solid #adb2b5;
  border-radius: 3px;
  background: #f4f4f4;
  color: #8b8b8b;
`;
const DockTabs = styled.div`
  display: flex;
  height: 22px;
`;
const DockTab = styled.button`
  height: 22px;
  width: ${(p) => p.$w}px;
  border: 1px solid #555;
  border-top: ${(p) => (p.$on ? "0" : "1px solid #000")};
  border-left: ${(p) => (p.$on ? "0" : "1px solid #555")};
  border-right-width: 2px;
  border-bottom-width: 2px;
  border-radius: 0 0 3px 3px;
  padding-top: ${(p) => (p.$on ? 2 : 1)}px;
  font-size: 11px;
  color: #000;
  white-space: nowrap;
`;
const DockRest = styled.span`
  flex: 1;
  border-top: 1px solid #000;
`;

const rows = [
  ["#Graphics"],
  ["View Scale", "1 : 100", "input"],
  ["Scale Value   1:", "100", "dim"],
  ["Display Model", "Normal"],
  ["Detail Level", "Fine"],
  ["Parts Visibility", "Show Original"],
  ["Visibility/Graphics ...", "Edit...", "button"],
  ["Graphic Display Opt...", "Edit...", "button"],
  ["Hide at scales coars...", " 1 : 100"],
  ["Discipline", "Architectural"],
  ["Show Hidden Lines", "By Discipline"],
  ["Color Scheme Locat...", "Background"],
  ["Color Scheme", "<none>", "button"],
  ["Default Analysis Dis...", "None"],
  ["Sun Path", "", "check"],
  ["#Extents"],
  ["Crop View", "", "check"],
  ["Crop Region Visible", "", "check"],
  ["Annotation Crop", "", "check"],
  ["Far Clipping", "No clip", "button"],
  ["Far Clip Offset", "3048.0", "dim"],
  ["Scope Box", "None"],
  ["#Identity Data"],
];

const Cell = ({ id, value, kind }) => {
  if (kind === "input") return <ScaleInput id={id} defaultValue={value} />;
  if (kind === "button") return <CellButton id={id}>{value}</CellButton>;
  if (kind === "check") return <Tick id={id} type="checkbox" />;
  return value;
};

const Properties = () => (
  <Palette>
    <PaletteHead>
      Properties
      <Tool $w={10} $h={16} aria-label="Close properties"><svg width="9" height="9"><path d="M1 1l7 7m0-7L1 8" stroke="#000" strokeWidth="2" /></svg></Tool>
    </PaletteHead>
    <PaletteBody>
      <TypePicker>
        <Preview>
          <svg width="28" height="32"><path d="M11 1l16 13-15 13v5h-2V1z" fill={D} /><circle cx="10" cy="14" r="9" fill="#e9ecef" stroke={D} strokeWidth="1.500" /></svg>
        </Preview>
        <TypeName>Section<br />Building Section</TypeName>
        <Caret $s={4} />
      </TypePicker>
      <FilterRow>
        <SelectBox>
          <Picker aria-label="Element filter"><option>Section: Section 2</option></Picker>
          <PickerCaret $s={4} $c="#000" />
        </SelectBox>
        <EditType><Icon name="editType" />Edit Type</EditType>
      </FilterRow>
      <Sheet>
        <SheetView>
          <Grid>
            <colgroup><col /><col style={{ width: 125 }} /><col style={{ width: 13 }} /></colgroup>
            <tbody>
              {rows.map(([k, v, kind], i) => k[0] === "#" ? (
                <Row key={k}>
                  <Group colSpan={3} scope="rowgroup">
                    <GroupLine>{k.slice(1)}
                      <svg width="7" height="8"><path d="M1 4l2.500-2.500L6 4M1 7.500L3.500 5 6 7.500" fill="none" stroke="#000" strokeWidth="1.300" /></svg>
                    </GroupLine>
                  </Group>
                </Row>
              ) : (
                <Row key={k} $dim={kind === "dim"}>
                  <Key scope="row">{["input", "button", "check"].includes(kind) ? <label htmlFor={`p${i}`}>{k}</label> : k}</Key>
                  <Val $flush={kind === "input" || kind === "button"}><Cell id={`p${i}`} value={v} kind={kind} /></Val>
                  <Val />
                </Row>
              ))}
            </tbody>
          </Grid>
        </SheetView>
        <VScroll>
          <Caret $dir="up" />
          <PaletteThumb><Grip /><Grip /><Grip /></PaletteThumb>
          <Spring />
          <Caret />
        </VScroll>
      </Sheet>
      <HelpRow><HelpLink href="#help">Properties help</HelpLink><Apply disabled>Apply</Apply></HelpRow>
    </PaletteBody>
    <DockTabs>
      <DockTab $w={65} $on>Properties</DockTab>
      <DockTab $w={147}>Project Browser - Project1</DockTab>
      <DockRest />
    </DockTabs>
  </Palette>
);

/* ---------- drawing windows ---------- */
const Mdi = styled.div`
  display: grid;
  flex: 1;
  min-width: 0;
  grid-template-columns: 531fr 532fr;
  grid-template-rows: 284fr 286fr;
  gap: 2px 3px;
  padding: 3px 1px 0 2px;
  background: #8f8f8f;
`;
const Win = styled.section`
  display: flex;
  flex-direction: column;
  min-width: 0;
  min-height: 0;
  grid-row: ${(p) => p.$row};
  grid-column: ${(p) => p.$col};
  padding: 0 8px 8px 6px;
  border: 1px solid ${(p) => (p.$active ? "#1c1c1c" : "#4e545c")};
  border-radius: 6px 6px 0 0;
  background: ${(p) => (p.$active ? "linear-gradient(#97b3d1, #b6cfea 30px)" : "linear-gradient(#bfcddb, #d7e4f2 30px)")};
  box-shadow: inset 0 0 0 1px ${(p) => (p.$active ? "#9fe0f0" : "#eaf1f9")};
`;
const WinHead = styled.header`
  display: flex;
  align-items: center;
  gap: 4px;
  height: 29px;
  padding: 4px 0 0 2px;
  font-size: 11px;
  color: ${(p) => (p.$active ? "#10161e" : "#4f5b68")};
`;
const WinTitle = styled.span`
  flex: 1;
  white-space: nowrap;
`;
const ChildButtons = styled.span`
  display: flex;
  gap: 2px;
`;
const ChildBtn = styled.button`
  display: flex;
  align-items: center;
  justify-content: center;
  width: 31px;
  height: 17px;
  border: 1px solid ${(p) => (p.$red ? "#6d2318" : "#8090a6")};
  border-radius: 2px;
  background: ${(p) => (p.$red ? "linear-gradient(#e0a094, #c75540 50%, #b33620 52%, #cf7058)" : p.$active ? "linear-gradient(#c8d9ec, #a8c1dd 50%, #9ab6d6 52%, #b4cce6)" : "linear-gradient(#d4dfeb, #c9d6e4)")};
`;
const Content = styled.div`
  display: grid;
  flex: 1;
  min-height: 0;
  grid-template-columns: 1fr 17px;
  grid-template-rows: 1fr 18px;
  border-top: 1px solid #6b6b6b;
  border-left: 1px solid #6b6b6b;
  background: #f0f0f0;
`;
const Canvas = styled.div`
  position: relative;
  min-width: 0;
  min-height: 0;
  overflow: hidden;
  background: #fff;
`;
const NavBar = styled.div`
  position: absolute;
  top: 1px;
  right: 1px;
  display: flex;
  flex-direction: column;
  align-items: center;
  width: 35px;
  height: 117px;
  border: 2px solid #bdbdbd;
  border-radius: 5px;
  background: #f4f4f4;
`;
const NavEnd = styled.span`
  align-self: flex-end;
  height: 10px;
  padding: 0 1px;
`;
const NavLine = styled.span`
  width: 26px;
  height: 1px;
  margin: 3px 0 8px;
  background: #c2c2c2;
`;
const NavGap = styled.span`
  height: ${(p) => p.$h}px;
`;
const Scroll = styled.div`
  display: flex;
  flex-direction: ${(p) => (p.$v ? "column" : "row")};
  align-items: center;
  justify-content: space-between;
  padding: ${(p) => (p.$v ? "7px 0 6px" : "0 4px 0 3px")};
  background: #f0f0f0;
  ${(p) => !p.$v && css`flex: 1;`}
`;
const Thumb = styled.span`
  width: 15px;
  height: 15px;
  border: 1px solid #979797;
  border-radius: 2px;
  background: linear-gradient(90deg, #f5f5f5, #d3d5d8);
`;
const ViewBar = styled.div`
  grid-column: 1 / 3;
  display: flex;
  align-items: center;
  min-width: 0;
  padding-bottom: 2px;
`;
const Scale = styled.button`
  width: 80px;
  padding-left: 4px;
  font-size: 11px;
  color: #000;
`;
const ViewTool = styled.button`
  width: 21px;
  height: 16px;
`;
const SizeGrip = styled.span`
  width: 18px;
  padding-left: 6px;
`;

const NavIcons = () => (
  <NavBar>
    <NavEnd><svg width="9" height="9"><circle cx="4.500" cy="4.500" r="3.800" fill="#fff" stroke="#a5a5a5" /><path d="M3 3l3 3m0-3L3 6" stroke="#999" /></svg></NavEnd>
    <NavGap $h={7} />
    <svg width="28" height="26" viewBox="0 0 28 26">
      <path d="M11 3h7q2 0 2 2v7a9 9 0 1 1-9-9z" fill="#e3e6e9" stroke="#9b9ea2" strokeWidth="1.200" />
      <circle cx="11" cy="12" r="5.500" fill="#f6f6f6" stroke="#b3b6b9" /><circle cx="11" cy="11" r="3" fill="none" stroke="#9b9ea2" />
      <text x="20" y="23" fontSize="10" fontWeight="700" fill="#7ea3cc" textAnchor="middle">2D</text>
    </svg>
    <NavGap $h={5} />
    <Caret $c="#999" />
    <NavLine />
    <svg width="18" height="18"><path d="M1 1h11v11H1z" fill="#b9d3a8" stroke="#7fa37f" /><circle cx="11.500" cy="11.500" r="3.500" fill="#eef1f4" stroke="#8f9398" strokeWidth="1.300" /><path d="M14 14l3 3" stroke="#8f9398" strokeWidth="2" /></svg>
    <NavGap $h={8} />
    <Caret $c="#999" />
    <NavGap $h={11} />
    <NavEnd><svg width="9" height="9"><circle cx="4.500" cy="4.500" r="3.800" fill="#fff" stroke="#a5a5a5" /><path d="M2 3.500h5M3 5.500h3" stroke="#999" /></svg></NavEnd>
  </NavBar>
);

const Window = ({ title, active, row, col, tools, children }) => (
  <Win $active={active} $row={row} $col={col}>
    <WinHead $active={active}>
      <svg width="16" height="16"><path d="M1 .5h10l4 4V12H1z" fill="#eaf2fa" stroke="#1c4473" /><path d="M11 0l5 5h-5z" fill="#2b66ab" /><rect y="8" width="16" height="8" fill="#123d70" /><text x="8" y="15" fontSize="7" fontWeight="700" fill="#fff" textAnchor="middle">RVT</text></svg>
      <WinTitle>{title}</WinTitle>
      <ChildButtons>
        <ChildBtn $active={active} aria-label="Minimize"><svg width="12" height="6"><rect x=".5" y="1.500" width="10" height="3.500" rx="1" fill="#fff" stroke="#4b5566" /></svg></ChildBtn>
        <ChildBtn $active={active} aria-label="Maximize"><svg width="12" height="10"><rect x="1" y="1" width="9" height="7" rx="1" fill="#fff" stroke="#4b5566" /><rect x="3.500" y="3.500" width="4" height="2" fill="#aebfd4" stroke="#4b5566" /></svg></ChildBtn>
        <ChildBtn $active={active} $red={active} aria-label="Close"><svg width="12" height="10"><path d="M2 1l8 8m0-8L2 9" stroke="#4b4b57" strokeWidth="4" /><path d="M2.500 1.500l7 7m0-7l-7 7" stroke="#fff" strokeWidth="2" /></svg></ChildBtn>
      </ChildButtons>
    </WinHead>
    <Content>
      <Canvas>{children}<NavIcons /></Canvas>
      <Scroll $v><Caret $dir="up" /><Thumb /><Caret /></Scroll>
      <ViewBar>
        <Scale>1 : 100</Scale>
        {tools.map((n) => <ViewTool key={n} aria-label={n}><Icon name={n} /></ViewTool>)}
        <Scroll><Caret $dir="left" /><Thumb /><Caret $dir="right" /></Scroll>
        <SizeGrip><svg width="9" height="9"><path d="M7 1h2M4 4h2M7 4h2M1 7h2M4 7h2M7 7h2" stroke="#b5b5b5" strokeWidth="2" /></svg></SizeGrip>
      </ViewBar>
    </Content>
  </Win>
);

const Sheet2D = styled.svg`
  width: 100%;
  height: 100%;
  overflow: hidden;
  stroke: #000;
  fill: none;
  shape-rendering: crispEdges;
  text {
    stroke: none;
    fill: #000;
    font-family: "Liberation Sans", Arial, sans-serif;
  }
`;

const SectionTwo = () => (
  <Sheet2D>
    <g fontSize="14"><text x="102" y="127">SECTION 2</text><text x="102" y="143">ORTHOGONAL SECTION</text><text x="102" y="159">SHOWS THE TRUE DIM</text>
      <text x="315" y="57" textAnchor="middle">200</text></g>
    <path d="M303 68h29M312 59v17M321 59v17M307 74l11-11M316 74l11-11" />
    <path d="M312 2000V83l1-1h7l1 1v1917" />
  </Sheet2D>
);
const SectionThree = () => (
  <Sheet2D>
    <g fontSize="17"><text x="16" y="45">SECTION 1</text><text x="16" y="65">SHOWS THE DIM OF</text><text x="16" y="85">THE END PROJECTION</text></g>
    <text x="354" y="62" textAnchor="middle" fontSize="16">183</text>
    <path d="M337 76h35M350 66v40M360 66v40M343 84l15-15M353 84l15-15" />
    <path d="M29 100h317M332 95l14 5-14 4M343 2000V114h61v1886M354 114v1886" />
  </Sheet2D>
);
const Marker = ({ x, y, tip }) => (
  <g stroke="#0637b8">
    <path d={tip} fill="#0637b8" />
    <circle cx={x} cy={y} r="28" fill="#fff" />
    <path d={`M${x - 30} ${y}h58M${x - 1} ${y - 12}h3M${x - 6} ${y + 12}h3m1 0h3m1 0h3`} />
  </g>
);
const FloorPlan = () => (
  <Sheet2D>
    <Marker x={308} y={60} tip="M309 21l39 39-39 40z" />
    <Marker x={328} y={158} tip="M344 121l20 53-53 21z" />
    <path d="M233 300l178 79-2 10-180-80z" fill="#858585" />
    <path d="M309 100v319M309 198L209 419" />
    <path d="M273 289v130" stroke="#0a800a" strokeDasharray="9 9" strokeDashoffset="3" />
    <path d="M168 340h156M167 348h154" stroke="#0a800a" strokeDasharray="9 9" />
    <path d="M149 329v32M144 340h16M144 348h16M142 334l14 13M142 341l14 14" />
    <path d="M211 279l-13 29M204 287l22 10M199 297l23 10M205 283l6 14M200 294l6 12" />
    <path d="M308 287h57M321 283l-13 4 13 3M166 395h56M207 391l15 4-15 4" />
    <path d="M308 419h42v10h-42zM211 419l39 17-4 10-40-19z" fill="#000" />
    <g fontSize="16"><text x="375" y="293">SECTION 1</text><text x="71" y="401">SECTION 2</text>
      <text transform="translate(197 289) rotate(-67)" textAnchor="middle">200</text>
      <text transform="translate(136 342) rotate(-90)" textAnchor="middle">183</text></g>
  </Sheet2D>
);

const tail = ["sunX", "shadowX", "cropX", "cropBulb", "glasses", "bulb", "bulbBox"];

/* ---------- status bar ---------- */
const Status = styled.footer`
  display: flex;
  align-items: stretch;
  height: 26px;
  border-top: 1px solid #7d7d7d;
  background: linear-gradient(#ececec, #c3c3c3);
  box-shadow: inset 0 1px 0 #fff;
  padding-top: 1px;
  color: #111;
  font-size: 11px;
`;
const Message = styled.span`
  flex: none;
  width: 395px;
  padding-left: 1px;
  line-height: 25px;
  white-space: nowrap;
`;
const StatusBtn = styled.button`
  display: flex;
  align-items: center;
  justify-content: ${(p) => (p.$start ? "flex-start" : "center")};
  gap: 3px;
  width: ${(p) => p.$w || 24}px;
  padding-left: ${(p) => (p.$start ? 5 : 0)}px;
  margin-right: 2px;
  background: ${(p) => (p.$flat ? "none" : "linear-gradient(#e2e2e2, #cccccc)")};
`;
const Combo = styled.span`
  position: relative;
  display: flex;
  align-items: center;
  width: ${(p) => p.$w}px;
  margin-right: 4px;
  border-top: 1px solid #c8c8c8;
  border-right: 2px solid #d0d0d0;
  background: #fff;
`;
const ComboSelect = styled.select`
  appearance: none;
  width: 100%;
  height: 100%;
  padding-left: 4px;
  font-size: 12px;
  color: #7c7c7c;
`;
const ComboCaret = styled(Caret)`
  position: absolute;
  right: 3px;
  bottom: 4px;
  pointer-events: none;
`;
const StatusEnd = styled.span`
  width: 60px;
`;

export default function App() {
  return (
    <Shell>
      <Global />
      <Frame>
        <Top />
        <RibbonBar />
        <OptionsBar />
        <Work>
          <Properties />
          <Mdi>
            <Window title="Section: Section 2 - Project1" active row="1" col="1" tools={["hatch", "cube", ...tail, "analytic", "lockDim"]}><SectionTwo /></Window>
            <Window title="Section: Section 3 - Project1" row="2" col="1" tools={["blank", "cube", ...tail, "analytic", "lockDim"]}><SectionThree /></Window>
            <Window title="Floor Plan: Level 1 - Project1" row="1 / 3" col="2" tools={["hatch", "cubeBlue", ...tail, "analyticOn", "lockDim"]}><FloorPlan /></Window>
          </Mdi>
        </Work>
        <Status>
          <Message>Click to select, TAB for alternates, CTRL adds, SHIFT unselects.</Message>
          <StatusBtn aria-label="Worksets"><Icon name="worksets" /></StatusBtn>
          <Combo $w={206}><ComboSelect aria-label="Active workset"><option></option></ComboSelect><ComboCaret $s={4} $c="#a5a5a5" /></Combo>
          <StatusBtn $w={52} $start aria-label="Editing requests"><Icon name="editReq" />:0</StatusBtn>
          <StatusBtn aria-label="Design options"><Icon name="options" /></StatusBtn>
          <StatusBtn aria-label="Add to set"><Icon name="optAdd" /></StatusBtn>
          <Combo $w={156}><ComboSelect aria-label="Design option"><option>Main Model</option></ComboSelect><ComboCaret $s={4} $c="#a5a5a5" /></Combo>
          <Spring />
          {["selLink", "selUnder", "selPin", "selFace", "selDrag", "wheel"].map((n) => <StatusBtn key={n} aria-label={n}><Icon name={n} /></StatusBtn>)}
          <StatusBtn $w={29} $flat aria-label="Filter"><Icon name="filter" />:0</StatusBtn>
          <StatusEnd />
        </Status>
      </Frame>
    </Shell>
  );
}
